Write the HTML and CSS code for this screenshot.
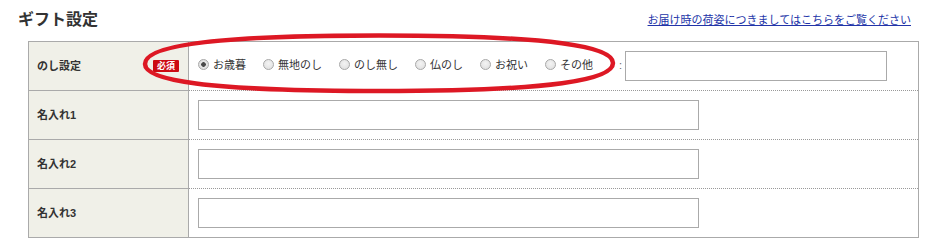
FILE: index.html
```html
<!DOCTYPE html>
<html lang="ja">
<head>
<meta charset="utf-8">
<title>ギフト設定</title>
<link rel="stylesheet" href="styles.css">
</head>
<body>
<div class="gift">
  <div class="header">
    <h2 class="title">ギフト設定</h2>
    <a class="link" href="#">お届け時の荷姿につきましてはこちらをご覧ください</a>
  </div>
  <div class="form">
    <div class="row">
      <div class="label">のし設定<span class="badge">必須</span></div>
      <div class="value noshi">
        <label class="opt"><input type="radio" name="noshi" checked><span>お歳暮</span></label>
        <label class="opt"><input type="radio" name="noshi"><span>無地のし</span></label>
        <label class="opt"><input type="radio" name="noshi"><span>のし無し</span></label>
        <label class="opt"><input type="radio" name="noshi"><span>仏のし</span></label>
        <label class="opt"><input type="radio" name="noshi"><span>お祝い</span></label>
        <label class="opt"><input type="radio" name="noshi"><span>その他</span></label>
        <span class="colon">:</span>
        <input class="text short" type="text">
      </div>
    </div>
    <div class="row">
      <div class="label">名入れ1</div>
      <div class="value"><input class="text long" type="text"></div>
    </div>
    <div class="row">
      <div class="label">名入れ2</div>
      <div class="value"><input class="text long" type="text"></div>
    </div>
    <div class="row">
      <div class="label">名入れ3</div>
      <div class="value"><input class="text long" type="text"></div>
    </div>
  </div>
  <svg class="mark" width="490" height="70" viewBox="140 30 490 70" aria-hidden="true">
    <path d="M145,64 C145,47 203,35.5 379,35.5 C555,35.5 613,47 613,63 C613,79.5 555,91 379,91 C203,91 145,80 145,64 Z" fill="none" stroke="#dd1824" stroke-width="4.5"/>
  </svg>
</div>
</body>
</html>
```

FILE: styles.css
```css
html, body {
  margin: 0;
  padding: 0;
  background: #fff;
}

body {
  font-family: "Liberation Sans", "Noto Sans CJK JP", sans-serif;
  color: #333;
  font-size: 11px;
}

.gift {
  position: relative;
  width: 926px;
}

.header {
  height: 39px;
  padding: 0 15px 2px 18px;
  display: flex;
  align-items: center;
  justify-content: space-between;
}

.title {
  margin: 0;
  font-size: 16px;
  font-weight: bold;
  color: #333;
  line-height: 20px;
}

.link {
  font-size: 11px;
  color: #2234a8;
  text-decoration: underline;
  line-height: 14px;
  margin-top: 1px;
}

.form {
  margin-left: 28px;
  width: 891px;
  box-sizing: border-box;
  border: 1px solid #aaa;
}

.row {
  display: grid;
  grid-template-columns: 160px 1fr;
}

.label {
  box-sizing: border-box;
  background: #f0f0e8;
  border-right: 1px solid #aaa;
  padding: 0 9px 3px 8px;
  display: flex;
  align-items: center;
  justify-content: space-between;
  font-weight: bold;
  font-size: 11px;
  color: #333;
}

.row + .row .label {
  border-top: 1px solid #aaa;
}

.row + .row .value {
  border-top: 1px dotted #999;
}

.badge {
  background: #cc0a12;
  color: #fff;
  font-size: 9px;
  font-weight: bold;
  width: 26px;
  height: 12px;
  line-height: 12px;
  text-align: center;
  border-radius: 1px;
  margin-top: 3px;
}

.value {
  padding: 9px;
  display: flex;
  align-items: center;
}

.opt {
  display: inline-flex;
  align-items: center;
  margin-right: 17px;
  padding-bottom: 3px;
  font-size: 11px;
  color: #333;
  line-height: 14px;
}

.opt input {
  appearance: none;
  -webkit-appearance: none;
  margin: 0 4px 0 0;
  width: 11px;
  height: 11px;
  border-radius: 50%;
  border: 1px solid #a8a8a8;
  background: radial-gradient(circle at 50% 40%, #f4f4f4 0%, #dcdcdc 100%);
  box-sizing: border-box;
}

.opt input:checked {
  background: radial-gradient(circle, #4a4a4a 0, #4a4a4a 2px, #e6e6e6 2.6px, #d8d8d8 100%);
}

.colon {
  margin-left: 9px;
  margin-right: 3px;
  padding-bottom: 3px;
  color: #666;
}

.text {
  box-sizing: border-box;
  height: 30px;
  border: 1px solid #aaa;
  margin: 0;
  padding: 0 4px;
  background: #fff;
}

.short {
  width: 262px;
}

.long {
  width: 501px;
}

.mark {
  position: absolute;
  left: 140px;
  top: 30px;
  pointer-events: none;
}
```
